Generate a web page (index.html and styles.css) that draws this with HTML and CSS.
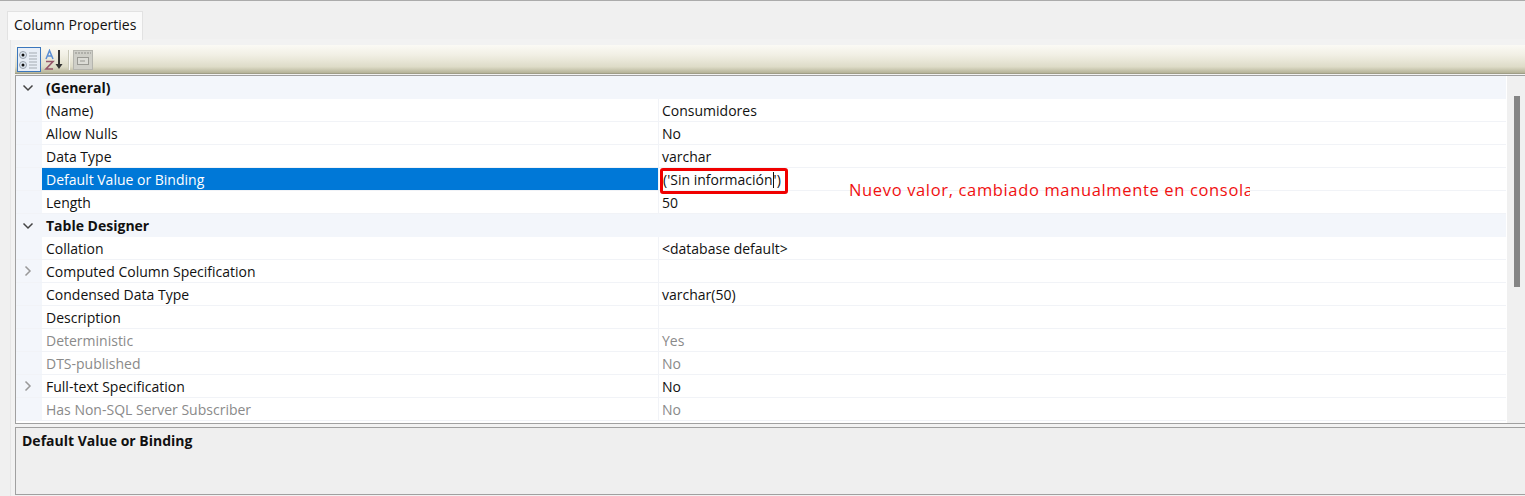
FILE: index.html
```html
<!DOCTYPE html>
<html>
  <head>
    <title>Column Properties</title>
    <link rel="stylesheet" href="styles.css">
  </head>
  <body>
    <div class="tabstrip">
      <div class="tab">Column Properties</div>
    </div>
    <div class="panel">
      <div class="toolbar">
        <button class="tool tool-active" type="button">
          <svg width="22" height="22" viewBox="0 0 22 22">
            <circle cx="5" cy="6" r="3.5" fill="#dfe8f2" stroke="#9aa3ad"/>
            <circle cx="5" cy="6" r="1.5" fill="#111"/>
            <circle cx="5" cy="16" r="3.5" fill="#dfe8f2" stroke="#9aa3ad"/>
            <circle cx="5" cy="16" r="1.5" fill="#111"/>
            <path d="M11 4h8M11 7h8M11 10h8M11 13h8M11 16h8M11 19h8" stroke="#a4abb2" stroke-width="1"/>
          </svg>
        </button>
        <button class="tool" type="button">
          <svg width="22" height="22" viewBox="0 0 22 22">
            <path d="M2 10 5.5 1.500 9 10M3.500 7h4" fill="none" stroke="#5b8fd4" stroke-width="1.500"/>
            <path d="M2 12.500h7L2 20h7" fill="none" stroke="#94566a" stroke-width="1.600"/>
            <path d="M15 1v17" stroke="#333" stroke-width="2"/>
            <path d="M11.500 15h7L15 20z" fill="#333"/>
          </svg>
        </button>
        <span class="tool-sep"></span>
        <button class="tool" type="button">
          <svg width="20" height="20" viewBox="0 0 20 20">
            <rect x="0.500" y="0.500" width="19" height="19" fill="#cfcfc8" stroke="#b5b5ae"/>
            <path d="M2 3h16" stroke="#8f8f8a" stroke-dasharray="2 1"/>
            <rect x="4.500" y="7.500" width="11" height="7" fill="#dcdcd6" stroke="#9a9a94"/>
            <path d="M7 11h5" stroke="#9a9a94"/>
          </svg>
        </button>
      </div>

      <div class="props">
        <div class="grid">
          <div class="group">
            <span class="caret"><svg width="12" height="8" viewBox="0 0 12 8"><path d="M1.500 1.500 6 6l4.500-4.500" fill="none" stroke="#444" stroke-width="1.500"/></svg></span>
            <span class="group-name">(General)</span>
          </div>
          <div class="row"><span class="gutter"></span><span class="name">(Name)</span><span class="value">Consumidores</span></div>
          <div class="row"><span class="gutter"></span><span class="name">Allow Nulls</span><span class="value">No</span></div>
          <div class="row"><span class="gutter"></span><span class="name">Data Type</span><span class="value">varchar</span></div>
          <div class="row row-selected"><span class="gutter"></span><span class="name">Default Value or Binding</span><span class="value">('Sin información<i class="cursor"></i>')</span></div>
          <div class="row"><span class="gutter"></span><span class="name">Length</span><span class="value">50</span></div>

          <div class="group">
            <span class="caret"><svg width="12" height="8" viewBox="0 0 12 8"><path d="M1.500 1.500 6 6l4.500-4.500" fill="none" stroke="#444" stroke-width="1.500"/></svg></span>
            <span class="group-name">Table Designer</span>
          </div>
          <div class="row"><span class="gutter"></span><span class="name">Collation</span><span class="value">&lt;database default&gt;</span></div>
          <div class="row"><span class="gutter"><svg width="8" height="12" viewBox="0 0 8 12"><path d="M1.500 1.500 6 6l-4.500 4.500" fill="none" stroke="#999" stroke-width="1.500"/></svg></span><span class="name">Computed Column Specification</span><span class="value"></span></div>
          <div class="row"><span class="gutter"></span><span class="name">Condensed Data Type</span><span class="value">varchar(50)</span></div>
          <div class="row"><span class="gutter"></span><span class="name">Description</span><span class="value"></span></div>
          <div class="row row-off"><span class="gutter"></span><span class="name">Deterministic</span><span class="value">Yes</span></div>
          <div class="row row-off"><span class="gutter"></span><span class="name">DTS-published</span><span class="value">No</span></div>
          <div class="row"><span class="gutter"><svg width="8" height="12" viewBox="0 0 8 12"><path d="M1.500 1.500 6 6l-4.500 4.500" fill="none" stroke="#999" stroke-width="1.500"/></svg></span><span class="name">Full-text Specification</span><span class="value">No</span></div>
          <div class="row row-off"><span class="gutter"></span><span class="name">Has Non-SQL Server Subscriber</span><span class="value">No</span></div>
        </div>
        <div class="scrollbar"><div class="thumb"></div></div>

        <div class="highlight"></div>
        <div class="note">Nuevo valor, cambiado manualmente en consola</div>
      </div>

      <div class="help">Default Value or Binding</div>
    </div>
  </body>
</html>
```

FILE: styles.css
```css
html,
body {
  margin: 0;
  height: 496px;
  overflow: hidden;
}
body {
  font-family: "Open Sans", "Noto Sans", sans-serif;
  font-size: 14px;
  color: #111;
  background-color: #f0f0f0;
}
.tabstrip {
  height: 39px;
  padding: 10px 0 0 7px;
  border-top: 1px solid #ababab;
  box-sizing: border-box;
  background-color: #f0f0f0;
}
.tab {
  display: inline-block;
  box-sizing: border-box;
  height: 29px;
  width: 136px;
  padding-left: 6px;
  line-height: 26px;
  font-size: 14px;
  white-space: nowrap;
  background-color: #fafafa;
  border: 1px solid #e2e2e2;
  border-bottom: none;
}
.panel {
  margin-left: 10px;
  padding: 6px 0 0 4px;
  height: 457px;
  box-sizing: border-box;
  background-color: #f2f2f2;
  border-left: 1px solid #e6e6e6;
}
.toolbar {
  display: flex;
  align-items: center;
  gap: 2px;
  height: 29px;
  padding-left: 2px;
  background: linear-gradient(#fbfaf5 0%, #f1efe4 35%, #dedcc8 75%, #b5b398 96%, #8e8d7a 100%);
}
.tool {
  width: 24px;
  height: 25px;
  padding: 0;
  display: flex;
  align-items: center;
  justify-content: center;
  background: none;
  border: 1px solid transparent;
}
.tool-active {
  background-color: #e8eef6;
  border-color: #3b76bd;
}
.tool-sep {
  width: 1px;
  height: 20px;
  margin: 0 -1px;
  background-color: #f8f8f4;
  border-left: 1px solid #c9c8b8;
}
.props {
  position: relative;
  display: flex;
  height: 349px;
  margin-top: 1px;
  box-sizing: border-box;
  border: 1px solid #a0a0a0;
  border-width: 1px 0 1px 1px;
  overflow: hidden;
}
.grid {
  width: 1491px;
  padding-right: 1px;
  box-sizing: border-box;
  background-color: #fff;
  overflow: hidden;
}
.group {
  display: flex;
  align-items: center;
  height: 23px;
  font-weight: 700;
  background-color: #f3f6fb;
}
.caret {
  width: 26px;
  padding-left: 6px;
  box-sizing: border-box;
  display: flex;
}
.group-name {
  padding-left: 4px;
}
.row {
  display: flex;
  height: 23px;
  box-sizing: border-box;
  line-height: 24px;
  border-bottom: 1px solid #f1f3f7;
}
.gutter {
  flex: 0 0 26px;
  display: flex;
  align-items: center;
  padding-left: 8px;
  box-sizing: border-box;
  background-color: #f3f6fb;
}
.name {
  flex: 0 0 617px;
  box-sizing: border-box;
  padding-left: 4px;
  border-right: 1px solid #f1f3f7;
  white-space: nowrap;
}
.value {
  flex: 1;
  padding-left: 3px;
  white-space: nowrap;
}
.row-selected .name {
  background-color: #0078d7;
  color: #fff;
}
.row-selected .value {
  padding-left: 4px;
}
.row-off {
  color: #8a8a8a;
}
.cursor {
  display: inline-block;
  width: 1px;
  height: 16px;
  vertical-align: -3px;
  background-color: #111;
}
.scrollbar {
  flex: 1;
  position: relative;
  background-color: #f0f0f0;
}
.thumb {
  position: absolute;
  left: 7px;
  top: 20px;
  width: 6px;
  height: 191px;
  background-color: #858585;
}
.highlight {
  position: absolute;
  left: 644px;
  top: 92px;
  width: 128px;
  height: 26px;
  box-sizing: border-box;
  border: 3px solid #f00000;
  border-radius: 3px;
}
.note {
  position: absolute;
  left: 833px;
  top: 102px;
  width: 401px;
  overflow: hidden;
  white-space: nowrap;
  font-size: 16.5px;
  letter-spacing: 0.65px;
  line-height: 24px;
  color: #f01010;
}
.help {
  height: 68px;
  margin-top: 3px;
  padding: 3px 0 0 6px;
  box-sizing: border-box;
  font-weight: 700;
  border: 1px solid #a0a0a0;
  border-width: 1px 0 1px 1px;
  background-color: #efefef;
}
```
